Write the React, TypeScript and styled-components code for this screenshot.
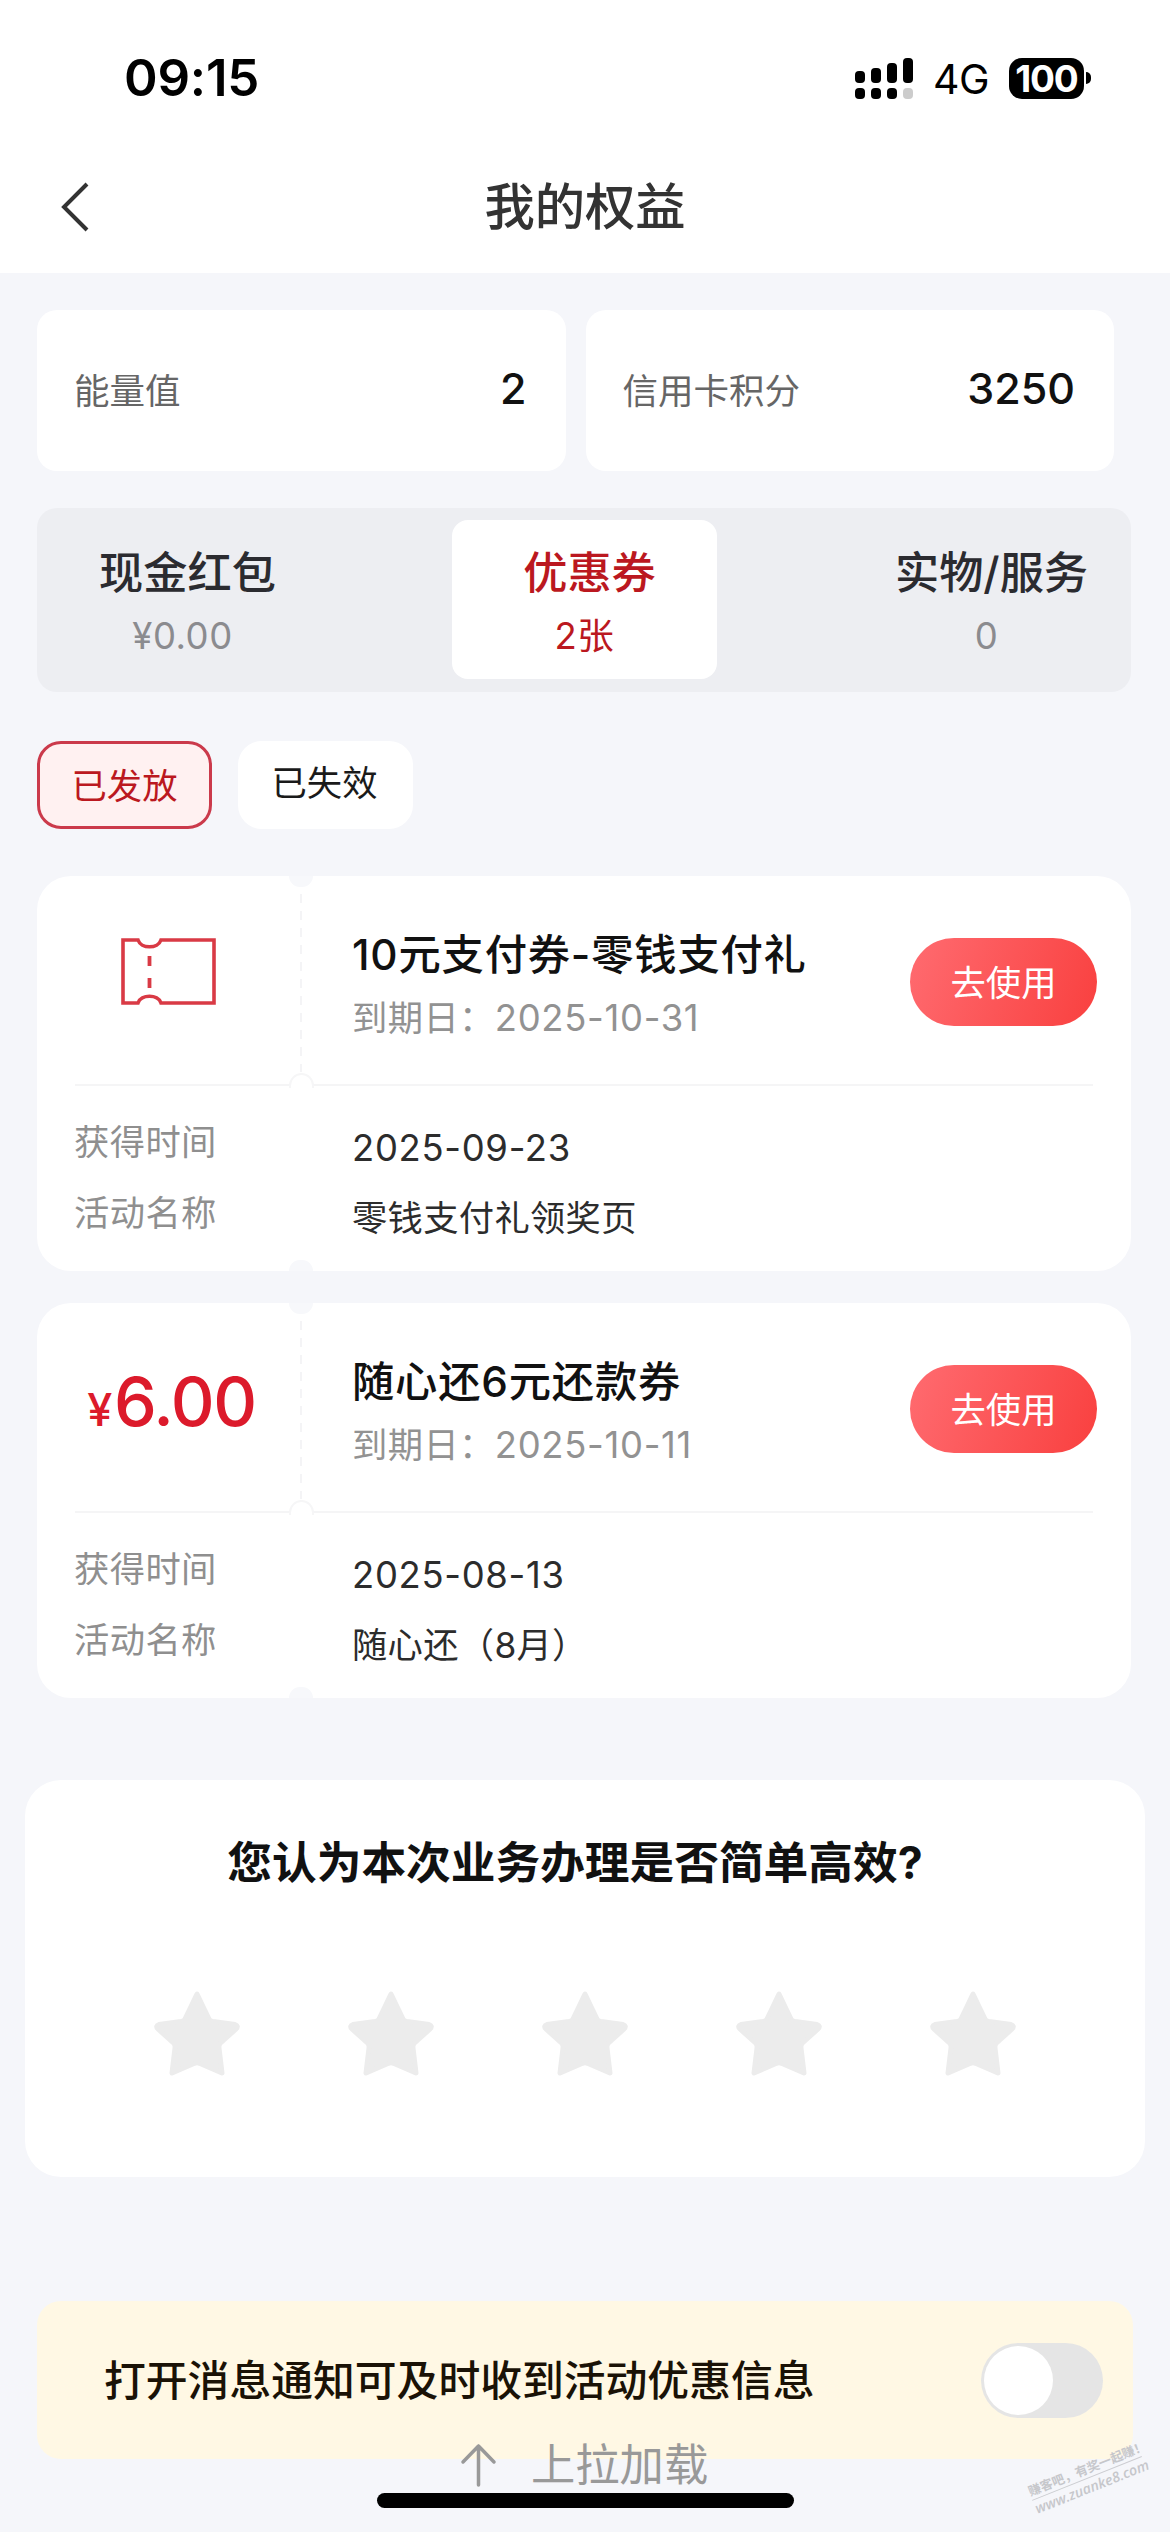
import React from 'react';
import styled, { createGlobalStyle, css } from 'styled-components';

const GlobalStyle = createGlobalStyle`
  * { box-sizing: border-box; }
  html, body { margin: 0; padding: 0; background: #f5f6fa; }
  body {
    font-family: Inter, "Noto Sans CJK SC", sans-serif;
    -webkit-font-smoothing: antialiased;
  }
`;

const Screen = styled.div`
  position: relative;
  width: 1170px;
  height: 2532px;
  overflow: hidden;
  display: flex;
  flex-direction: column;
  background: #f5f6fa;
  white-space: nowrap;
`;

const Top = styled.header`
  height: 273px;
  background: #fff;
`;

const StatusBar = styled.div`
  display: flex;
  align-items: center;
  height: 156px;
  padding: 0 79px 0 124px;
`;

const Clock = styled.div`
  flex: 1;
  font-size: 51px;
  font-weight: 600;
  line-height: 60px;
  letter-spacing: -0.2px;
  color: #000;
`;

const Network = styled.div`
  margin: 2px 20px 0 19px;
  width: 56px;
  font-size: 41px;
  line-height: 50px;
  color: #000;
  letter-spacing: -0.6px;
`;

const Battery = styled.div`
  width: 75px;
  height: 41px;
  border-radius: 13px;
  background: #000;
  color: #fff;
  font-size: 37px;
  font-weight: 700;
  line-height: 41px;
  text-align: center;
  letter-spacing: -1.2px;
`;

const BatteryTip = styled.div`
  width: 5px;
  height: 12px;
  margin-left: 2px;
  border-radius: 0 5px 5px 0;
  background: #000;
`;

const NavBar = styled.nav`
  display: grid;
  grid-template-columns: 120px 1fr 120px;
  align-items: center;
  height: 102px;
  padding-left: 0;
`;

const BackButton = styled.button`
  border: 0;
  padding: 0 0 0 60px;
  background: none;
  display: flex;
`;

const PageTitle = styled.h1`
  margin: 0;
  text-align: center;
  font-size: 50.3px;
  font-weight: 500;
  line-height: 60px;
  color: #333;
`;

const Content = styled.main`
  display: flex;
  flex-direction: column;
  padding: 37px 39px 0 37px;
`;

const Stats = styled.section`
  display: flex;
  gap: 20px;
`;

const StatCard = styled.div`
  width: 528.5px;
  height: 161px;
  padding: 0 39px 5px 37px;
  border-radius: 20px;
  background: #fff;
  display: flex;
  align-items: center;
  justify-content: space-between;
`;

const StatLabel = styled.span`
  font-size: 35.5px;
  color: #666;
`;

const StatValue = styled.span`
  font-size: 43px;
  font-weight: 500;
  color: #111;
`;

const Tabs = styled.section`
  margin-top: 37px;
  width: 1094px;
  height: 184px;
  padding: 12px 12px 13px 13px;
  border-radius: 20px;
  background: #edeef2;
  display: flex;
  justify-content: space-between;
`;

const Tab = styled.button<{ $active?: boolean }>`
  width: 265px;
  border: 0;
  border-radius: 16px;
  padding: 26px 0 0;
  font-family: inherit;
  background: ${(p) => (p.$active ? '#fff' : 'transparent')};
  color: ${(p) => (p.$active ? '#bb1820' : '#2b2b30')};
  display: flex;
  flex-direction: column;
  align-items: center;
`;

const TabTitle = styled.span`
  font-size: 44.2px;
  font-weight: 500;
  line-height: 54px;
  padding-left: 10px;
`;

const TabSub = styled.span<{ $active?: boolean }>`
  margin-top: 12px;
  font-size: 36.5px;
  line-height: 48px;
  letter-spacing: 0.5px;
  color: ${(p) => (p.$active ? '#bb1820' : '#8b8b8f')};
`;

const Chips = styled.section`
  display: flex;
  gap: 26px;
  margin: 49px 0 47px;
`;

const Chip = styled.button<{ $active?: boolean }>`
  width: 175px;
  height: 88px;
  border-radius: 24px;
  font-family: inherit;
  font-size: 35.3px;
  line-height: 44px;
  padding: 0 2px 2px 0;
  ${(p) =>
    p.$active
      ? css`
          padding: 3px 0 0;
          border: 3px solid #cb3a4b;
          background: #fff1f1;
          color: #bb1820;
        `
      : css`
          border: 0;
          background: #fff;
          color: #1a1a1a;
        `}
`;

const CouponList = styled.section`
  display: flex;
  flex-direction: column;
  gap: 32px;
`;

const CouponCard = styled.article`
  position: relative;
  width: 1094px;
  height: 395px;
  border-radius: 34px;
  background: #fff;
`;

const Notch = styled.i<{ $edge: 'top' | 'bottom' }>`
  position: absolute;
  left: 252px;
  width: 24px;
  height: 11px;
  background: #f7f8fb;
  ${(p) =>
    p.$edge === 'top'
      ? css`
          top: 0;
          border-radius: 0 0 12px 12px;
        `
      : css`
          bottom: 0;
          border-radius: 12px 12px 0 0;
        `}
`;

const Arch = styled.i`
  position: absolute;
  left: 252px;
  top: 197px;
  width: 25px;
  height: 15px;
  border: 2px solid #f6f6f7;
  border-bottom: 0;
  border-radius: 13px 13px 0 0;
  background: #fff;
`;

const CouponHead = styled.div`
  height: 210px;
  margin: 0 38px;
  border-bottom: 2px solid #f5f5f6;
  display: flex;
`;

const CouponFace = styled.div`
  width: 227px;
  margin: 18px 0 12px;
  background: repeating-linear-gradient(#f4f4f6 0 9px, transparent 9px 17px) right / 2px 100% no-repeat;
  display: flex;
  justify-content: center;
`;

const FaceIcon = styled.svg`
  width: 95px;
  height: 67px;
  margin: 44px 0 0 -41px;
`;

const Amount = styled.div`
  margin: 39px 0 0 -54px;
  padding-left: 20px;
  display: flex;
  align-items: baseline;
  font-size: 68px;
  font-weight: 500;
  line-height: 82px;
  color: #dc1a2b;
  letter-spacing: -1.4px;
`;

const Currency = styled.span`
  font-size: 45px;
  margin-right: 3px;
`;

const CouponInfo = styled.div`
  flex: 1;
  padding: 51px 0 0 50px;
`;

const CouponTitle = styled.h2`
  margin: 0;
  font-size: 42.3px;
  font-weight: 500;
  line-height: 56px;
  letter-spacing: 0.8px;
  color: #111;
`;

const Expiry = styled.p`
  margin: 11px 0 0;
  font-size: 35.3px;
  line-height: 48px;
  letter-spacing: 0.4px;
  color: #929292;
`;

const UseButton = styled.button`
  width: 187px;
  height: 88px;
  margin: 62px -4px 0 0;
  padding: 0 0 3px;
  border: 0;
  border-radius: 44px;
  background: linear-gradient(110deg, #ff6b70, #f9403f);
  color: #fff;
  font-family: inherit;
  font-size: 35.3px;
`;

const Details = styled.dl`
  margin: 0;
  padding: 33px 37px 0;
  display: grid;
  grid-template-columns: 278px 1fr;
  grid-auto-rows: 71px;
`;

const DetailLabel = styled.dt`
  font-size: 35.3px;
  line-height: 48px;
  letter-spacing: 0.4px;
  color: #8f8f8f;
`;

const DetailValue = styled.dd`
  margin: 5px 0 0;
  font-size: 35.3px;
  line-height: 48px;
  letter-spacing: 0.3px;
  color: #2c2c2c;
`;

const DateValue = styled.span`
  font-size: 36.4px;
  letter-spacing: 0.7px;
`;

const Survey = styled.section`
  width: 1120px;
  height: 397px;
  margin: 82px 0 0 -12px;
  padding-top: 55px;
  border-radius: 36px;
  background: #fff;
  display: flex;
  flex-direction: column;
  align-items: center;
`;

const Question = styled.h2`
  margin: 0;
  padding-right: 20px;
  font-size: 44.7px;
  font-weight: 700;
  line-height: 56px;
  color: #111;
`;

const Stars = styled.div`
  display: flex;
  gap: 104px;
  margin-top: 98px;
`;

const StarIcon = styled.svg`
  width: 90px;
  height: 90px;
`;

const Notice = styled.section`
  width: 1096px;
  height: 158px;
  margin-top: 124px;
  padding: 0 30px 0 67px;
  border-radius: 24px;
  background: #fff8e4;
  display: flex;
  align-items: center;
  justify-content: space-between;
`;

const NoticeText = styled.span`
  padding-bottom: 4px;
  font-size: 41.8px;
  font-weight: 500;
  color: #1a1206;
`;

const Switch = styled.button`
  width: 122px;
  height: 75px;
  padding: 3px;
  border: 0;
  border-radius: 38px;
  background: #e5e5e5;
`;

const Knob = styled.i`
  display: block;
  width: 69px;
  height: 69px;
  border-radius: 50%;
  background: #fff;
`;

const PullHint = styled.div`
  position: absolute;
  left: 460px;
  top: 2437px;
  display: flex;
  align-items: center;
  gap: 34px;
  font-size: 44.3px;
  line-height: 56px;
  color: #999;
`;

const HomeIndicator = styled.div`
  position: absolute;
  left: 377px;
  top: 2493px;
  width: 417px;
  height: 15px;
  border-radius: 8px;
  background: #000;
`;

const Watermark = styled.div`
  position: absolute;
  left: 1028px;
  top: 2461px;
  width: 118px;
  transform: rotate(-21.8deg);
  color: #c6c7cb;
  font-weight: 700;
  display: flex;
  flex-direction: column;
`;

const WatermarkSlogan = styled.div`
  font-size: 12.6px;
  line-height: 17px;
  border-bottom: 1px solid #cccdd1;
`;

const WatermarkUrl = styled.div`
  font-family: "Open Sans", sans-serif;
  font-size: 14.2px;
  line-height: 17px;
  font-style: italic;
  font-weight: 600;
`;

const SignalIcon = () => {
  const tops = [70, 67, 62, 57];
  return (
    <svg width="59" height="41" viewBox="856 57 59 41">
      {tops.map((y, i) => (
        <React.Fragment key={y}>
          <rect x={856 + i * 16} y={y} width="10" height={82 - y} rx="4" fill="#000" />
          <rect x={856 + i * 16} y="87" width="10" height="11" rx="4" fill={i === 3 ? '#ccc' : '#000'} />
        </React.Fragment>
      ))}
    </svg>
  );
};

const TicketIcon = () => (
  <FaceIcon viewBox="0 0 95 67" fill="none" stroke="#d93a45" strokeWidth="3.6">
    <path d="M2 2H17C20 11 37 11 40 2H93V65H40C37 56 20 56 17 65H2Z" />
    <path d="M28.5 18V28M28.5 40V50" strokeWidth="3.8" />
  </FaceIcon>
);

const Star = () => (
  <StarIcon viewBox="0 0 90 90">
    <path
      d="M45 5L57 30Q58 32 61 32.500L83 35.500Q87 37 84 40L68.500 54Q66.500 56 67 59L70 84L48 74.500Q45 73 42 74.500L20 84L23 59Q23.500 56 21.500 54L6 40Q3 37 7 35.500L29 32.500Q32 32 33 30Z"
      fill="#ececec"
      stroke="#ececec"
      strokeWidth="5"
      strokeLinejoin="round"
    />
  </StarIcon>
);

const tabs = [
  { title: '现金红包', sub: '¥0.00' },
  { title: '优惠券', sub: '2张', active: true },
  { title: '实物/服务', sub: '0' },
];

const coupons = [
  {
    title: '10元支付券-零钱支付礼',
    expiry: '2025-10-31',
    received: '2025-09-23',
    activity: '零钱支付礼领奖页',
  },
  {
    amount: '6.00',
    title: '随心还6元还款券',
    expiry: '2025-10-11',
    received: '2025-08-13',
    activity: '随心还（8月）',
  },
];

const Coupon = ({ amount, title, expiry, received, activity }: (typeof coupons)[number]) => (
  <CouponCard>
    <CouponHead>
      <CouponFace>
        {amount ? (
          <Amount>
            <Currency>¥</Currency>
            {amount}
          </Amount>
        ) : (
          <TicketIcon />
        )}
      </CouponFace>
      <CouponInfo>
        <CouponTitle>{title}</CouponTitle>
        <Expiry>
          到期日：<DateValue>{expiry}</DateValue>
        </Expiry>
      </CouponInfo>
      <UseButton>去使用</UseButton>
    </CouponHead>
    <Details>
      <DetailLabel>获得时间</DetailLabel>
      <DetailValue>
        <DateValue>{received}</DateValue>
      </DetailValue>
      <DetailLabel>活动名称</DetailLabel>
      <DetailValue>{activity}</DetailValue>
    </Details>
    <Notch $edge="top" />
    <Arch />
    <Notch $edge="bottom" />
  </CouponCard>
);

export default function App() {
  return (
    <>
      <GlobalStyle />
      <Screen>
        <Top>
          <StatusBar>
            <Clock>09:15</Clock>
            <SignalIcon />
            <Network>4G</Network>
            <Battery>100</Battery>
            <BatteryTip />
          </StatusBar>
          <NavBar>
            <BackButton aria-label="返回">
              <svg width="30" height="50" viewBox="0 0 30 50" fill="none" stroke="#333" strokeWidth="4">
                <path d="M27 2L4 25L27 48" />
              </svg>
            </BackButton>
            <PageTitle>我的权益</PageTitle>
          </NavBar>
        </Top>
        <Content>
          <Stats>
            <StatCard>
              <StatLabel>能量值</StatLabel>
              <StatValue>2</StatValue>
            </StatCard>
            <StatCard>
              <StatLabel>信用卡积分</StatLabel>
              <StatValue>3250</StatValue>
            </StatCard>
          </Stats>
          <Tabs>
            {tabs.map((t) => (
              <Tab key={t.title} $active={t.active}>
                <TabTitle>{t.title}</TabTitle>
                <TabSub $active={t.active}>{t.sub}</TabSub>
              </Tab>
            ))}
          </Tabs>
          <Chips>
            <Chip $active>已发放</Chip>
            <Chip>已失效</Chip>
          </Chips>
          <CouponList>
            {coupons.map((c) => (
              <Coupon key={c.title} {...c} />
            ))}
          </CouponList>
          <Survey>
            <Question>您认为本次业务办理是否简单高效?</Question>
            <Stars>
              {[1, 2, 3, 4, 5].map((n) => (
                <Star key={n} />
              ))}
            </Stars>
          </Survey>
          <Notice>
            <NoticeText>打开消息通知可及时收到活动优惠信息</NoticeText>
            <Switch aria-label="消息通知">
              <Knob />
            </Switch>
          </Notice>
        </Content>
        <PullHint>
          <svg width="37" height="44" viewBox="0 0 37 44" fill="none" stroke="#999" strokeWidth="3.500" strokeLinecap="round" strokeLinejoin="round">
            <path d="M18.500 42V3M3 19L18.500 3L34 19" />
          </svg>
          <span>上拉加载</span>
        </PullHint>
        <HomeIndicator />
        <Watermark>
          <WatermarkSlogan>赚客吧，有奖一起赚！</WatermarkSlogan>
          <WatermarkUrl>www.zuanke8.com</WatermarkUrl>
        </Watermark>
      </Screen>
    </>
  );
}
